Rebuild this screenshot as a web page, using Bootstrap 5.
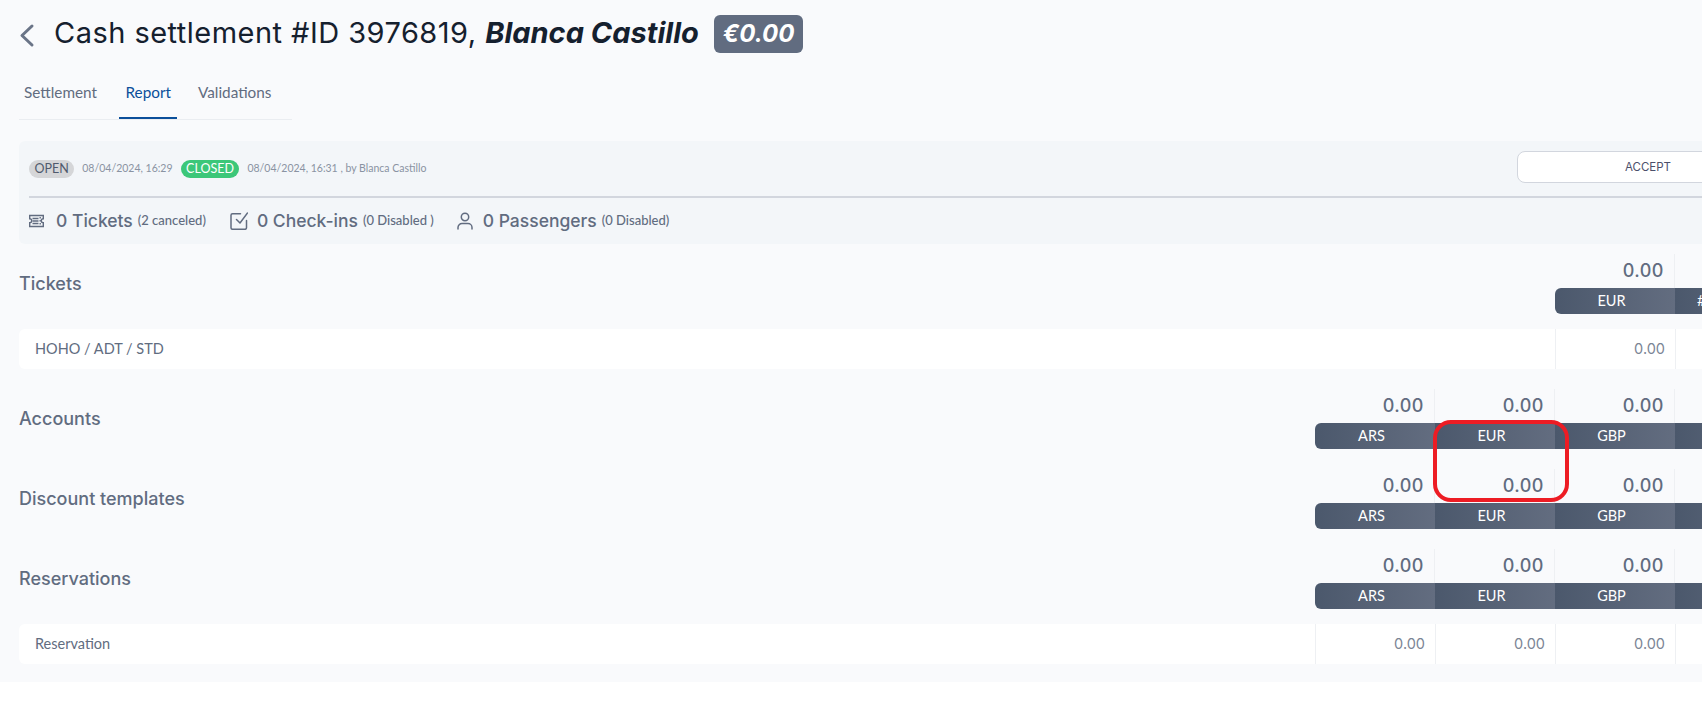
<!DOCTYPE html>
<html lang="en">
<head>
    <meta charset="UTF-8">
    <meta name="viewport" content="width=device-width, initial-scale=1.0">
    <title>Cash settlement</title>
    <link href="https://cdn.jsdelivr.net/npm/bootstrap@5.3.0/dist/css/bootstrap.min.css" rel="stylesheet">
    <script src="https://cdn.jsdelivr.net/npm/bootstrap@5.3.0/dist/js/bootstrap.bundle.min.js"></script>

    <style>
        html, body {
            overflow: hidden;
            background-color: #ffffff;
        }

        body {
            font-family: 'Lato', sans-serif;
            color: #616c80;
            height: 722px;
        }

        .page-frame {
            position: relative;
            width: 1702px;
            height: 682px;
            overflow: hidden;
            background-color: #f9fafc;
        }

        .page-inner {
            width: 1776px;
            margin-left: 19px;
        }

        /* cabecera */
        .head-row {
            height: 76px;
            padding-top: 15px;
        }

        .back-link {
            width: 35px;
            margin-top: 8px;
            color: #6a7487;
        }

        .head-title {
            font-family: 'Inter', sans-serif;
            font-size: 29px;
            font-weight: 400;
            letter-spacing: .47px;
            color: #15202e;
            margin: 1px 0 0;
        }

        .head-title em {
            font-weight: 700;
            letter-spacing: 0;
        }

        .total-tag {
            margin-left: 15px;
            height: 38px;
            padding: 0 9px;
            border-radius: 6px;
            background-color: #616c80;
            color: #ffffff;
            font-family: 'Inter', sans-serif;
            font-size: 24px;
            font-weight: 700;
            font-style: italic;
            line-height: 38px;
        }

        /* tabs */
        .tab-strip {
            width: 273px;
            height: 44px;
            border-bottom: 1px solid #eaedf1;
            margin-bottom: 21px;
        }

        .tab-link {
            display: block;
            height: 43px;
            padding: 5px 6px 0;
            margin-right: 15px;
            font-size: 15.300px;
            color: #616c80;
            text-decoration: none;
        }

        .tab-link:first-child {
            padding-left: 5px;
            margin-right: 16.500px;
        }

        .tab-link.tab-on {
            color: #0b4f9a;
            border-bottom: 2px solid #0b4f9a;
        }

        /* panel resumen */
        .sum-panel {
            height: 103px;
            background-color: #f3f6f9;
            border-radius: 6px;
            padding: 10px 16px 0 10px;
            margin-bottom: 10px;
        }

        .sum-top {
            height: 47px;
            border-bottom: 2px solid #d2d6de;
        }

        .state-box {
            height: 36px;
        }

        .state-tag {
            height: 18px;
            padding: 0 5.500px;
            border-radius: 9px;
            font-size: 12.500px;
            line-height: 18px;
            background-color: #d5d6d8;
            color: #4f5a6d;
            margin-right: 8px;
        }

        .state-tag.is-closed {
            background-color: #3cc779;
            color: #ffffff;
        }

        .state-date {
            font-size: 10.500px;
            color: #8a93a2;
            margin-right: 8px;
        }

        .accept-btn {
            width: 262px;
            height: 32px;
            padding: 1px 0 0;
            background-color: #ffffff;
            border: 1px solid #d2d6de;
            border-radius: 8px;
            font-family: 'Inter', sans-serif;
            font-size: 11.500px;
            color: #4b4f6b;
        }

        .stat-row {
            height: 46px;
        }

        .stat-item {
            margin-right: 24px;
            font-family: 'Inter', sans-serif;
            font-size: 17.500px;
            font-weight: 500;
            color: #616c80;
        }

        .stat-item svg {
            margin-right: 9px;
        }

        .stat-item span {
            font-family: 'Lato', sans-serif;
            font-size: 13px;
            margin-left: 5px;
        }

        .stat-item.stat-last {
            margin-left: -2px;
        }

        /* secciones */
        .sect-head {
            height: 60px;
            margin-bottom: 15px;
        }

        .sect-head.no-rows {
            margin-bottom: 20px;
        }

        .sect-title {
            padding-top: 16px;
            font-family: 'Inter', sans-serif;
            font-size: 18px;
            font-weight: 500;
            color: #616c80;
        }

        .money-col {
            width: 120px;
        }

        .money-top {
            height: 34px;
            padding-right: 10px;
            border-right: 1px solid #eef0f3;
            text-align: right;
            font-family: 'Inter', sans-serif;
            font-size: 18px;
            font-weight: 500;
            letter-spacing: .5px;
            line-height: 34px;
            color: #616c80;
        }

        .money-bar {
            height: 26px;
            padding-right: 7px;
            background: linear-gradient(90deg, #4b586c, #636d80);
            color: #ffffff;
            text-align: center;
            font-size: 14.500px;
            line-height: 26px;
        }

        .sect-title + .money-col .money-bar {
            border-radius: 6px 0 0 6px;
        }

        .money-bar.bar-count {
            padding-left: 22px;
            text-align: left;
        }

        .data-row {
            height: 40px;
            background-color: #ffffff;
            border-radius: 6px;
            margin-bottom: 20px;
        }

        .data-label {
            padding-left: 16px;
            font-size: 14.500px;
            line-height: 40px;
            color: #616c80;
        }

        .data-cell {
            width: 120px;
            padding-right: 10px;
            border-left: 1px solid #eef0f3;
            text-align: right;
            font-family: 'Inter', sans-serif;
            font-size: 14.500px;
            line-height: 40px;
            color: #7b8595;
        }

        /* marca roja sobre la captura */
        .red-mark {
            position: absolute;
            left: 1433px;
            top: 420px;
            width: 136px;
            height: 82px;
            border: 4px solid #ed1c24;
            border-radius: 18px;
        }
    </style>
</head>
<body>

    <div class="page-frame">
        <div class="page-inner">

            <!-- Titulo -->
            <div class="head-row d-flex align-items-start">
                <a href="#" class="back-link">
                    <svg class="d-block" width="16" height="25" viewBox="0 0 16 25" fill="none" stroke="currentColor" stroke-width="3" stroke-linecap="round" stroke-linejoin="round"><path d="M13 3 3 12.500 13 22"/></svg>
                </a>
                <h1 class="head-title">Cash settlement #ID 3976819, <em>Blanca Castillo</em></h1>
                <div class="total-tag">€0.00</div>
            </div>

            <!-- Tabs -->
            <div class="tab-strip d-flex">
                <a href="#" class="tab-link">Settlement</a>
                <a href="#" class="tab-link tab-on">Report</a>
                <a href="#" class="tab-link">Validations</a>
            </div>

            <!-- Resumen -->
            <div class="sum-panel">
                <div class="sum-top d-flex align-items-start">
                    <div class="state-box d-flex align-items-center flex-grow-1">
                        <div class="state-tag">OPEN</div>
                        <div class="state-date">08/04/2024, 16:29</div>
                        <div class="state-tag is-closed">CLOSED</div>
                        <div class="state-date">08/04/2024, 16:31 , by Blanca Castillo</div>
                    </div>
                    <button type="button" class="btn accept-btn">ACCEPT</button>
                </div>
                <div class="stat-row d-flex align-items-center">
                    <div class="stat-item d-flex align-items-center">
                        <svg width="18" height="18" viewBox="0 0 18 18" fill="none" stroke="currentColor" stroke-width="1.400"><path d="M.700 3.500h13.600v3.200a2 2 0 0 0 0 4v3.800H.700v-3.800a2 2 0 0 0 0-4z"/><path d="M3.500 6.500h6M3.500 9h6M3.500 11.500h6M11.200 5v1.500M11.200 8v1.500M11.200 11v1.500"/></svg>
                        0 Tickets<span>(2 canceled)</span>
                    </div>
                    <div class="stat-item d-flex align-items-center">
                        <svg width="18" height="18" viewBox="0 0 18 18" fill="none" stroke="currentColor" stroke-width="1.500" stroke-linecap="round" stroke-linejoin="round"><path d="M16.500 8.500v7.300a1.500 1.500 0 0 1-1.500 1.500H2.500A1.500 1.500 0 0 1 1 15.800V3.200a1.500 1.500 0 0 1 1.500-1.500h8"/><path d="M6.500 7.500 10 11 17.500 1"/></svg>
                        0 Check-ins<span>(0 Disabled )</span>
                    </div>
                    <div class="stat-item stat-last d-flex align-items-center">
                        <svg width="18" height="18" viewBox="0 0 18 18" fill="none" stroke="currentColor" stroke-width="1.500" stroke-linecap="round"><circle cx="9" cy="5" r="3.700"/><path d="M2 17v-1.500a4 4 0 0 1 4-4h6a4 4 0 0 1 4 4V17"/></svg>
                        0 Passengers<span>(0 Disabled)</span>
                    </div>
                </div>
            </div>

            <!-- Tickets -->
            <div class="sect-head d-flex">
                <div class="sect-title flex-grow-1">Tickets</div>
                <div class="money-col"><div class="money-top">0.00</div><div class="money-bar">EUR</div></div>
                <div class="money-col"><div class="money-top"></div><div class="money-bar bar-count">#</div></div>
            </div>
            <div class="data-row d-flex">
                <div class="data-label flex-grow-1">HOHO / ADT / STD</div>
                <div class="data-cell">0.00</div>
                <div class="data-cell"></div>
            </div>

            <!-- Accounts -->
            <div class="sect-head no-rows d-flex">
                <div class="sect-title flex-grow-1">Accounts</div>
                <div class="money-col"><div class="money-top">0.00</div><div class="money-bar">ARS</div></div>
                <div class="money-col"><div class="money-top">0.00</div><div class="money-bar">EUR</div></div>
                <div class="money-col"><div class="money-top">0.00</div><div class="money-bar">GBP</div></div>
                <div class="money-col"><div class="money-top"></div><div class="money-bar"></div></div>
            </div>

            <!-- Discount templates -->
            <div class="sect-head no-rows d-flex">
                <div class="sect-title flex-grow-1">Discount templates</div>
                <div class="money-col"><div class="money-top">0.00</div><div class="money-bar">ARS</div></div>
                <div class="money-col"><div class="money-top">0.00</div><div class="money-bar">EUR</div></div>
                <div class="money-col"><div class="money-top">0.00</div><div class="money-bar">GBP</div></div>
                <div class="money-col"><div class="money-top"></div><div class="money-bar"></div></div>
            </div>

            <!-- Reservations -->
            <div class="sect-head d-flex">
                <div class="sect-title flex-grow-1">Reservations</div>
                <div class="money-col"><div class="money-top">0.00</div><div class="money-bar">ARS</div></div>
                <div class="money-col"><div class="money-top">0.00</div><div class="money-bar">EUR</div></div>
                <div class="money-col"><div class="money-top">0.00</div><div class="money-bar">GBP</div></div>
                <div class="money-col"><div class="money-top"></div><div class="money-bar"></div></div>
            </div>
            <div class="data-row d-flex">
                <div class="data-label flex-grow-1">Reservation</div>
                <div class="data-cell">0.00</div>
                <div class="data-cell">0.00</div>
                <div class="data-cell">0.00</div>
                <div class="data-cell"></div>
            </div>
        </div>

        <div class="red-mark"></div>
    </div>

</body>
</html>
